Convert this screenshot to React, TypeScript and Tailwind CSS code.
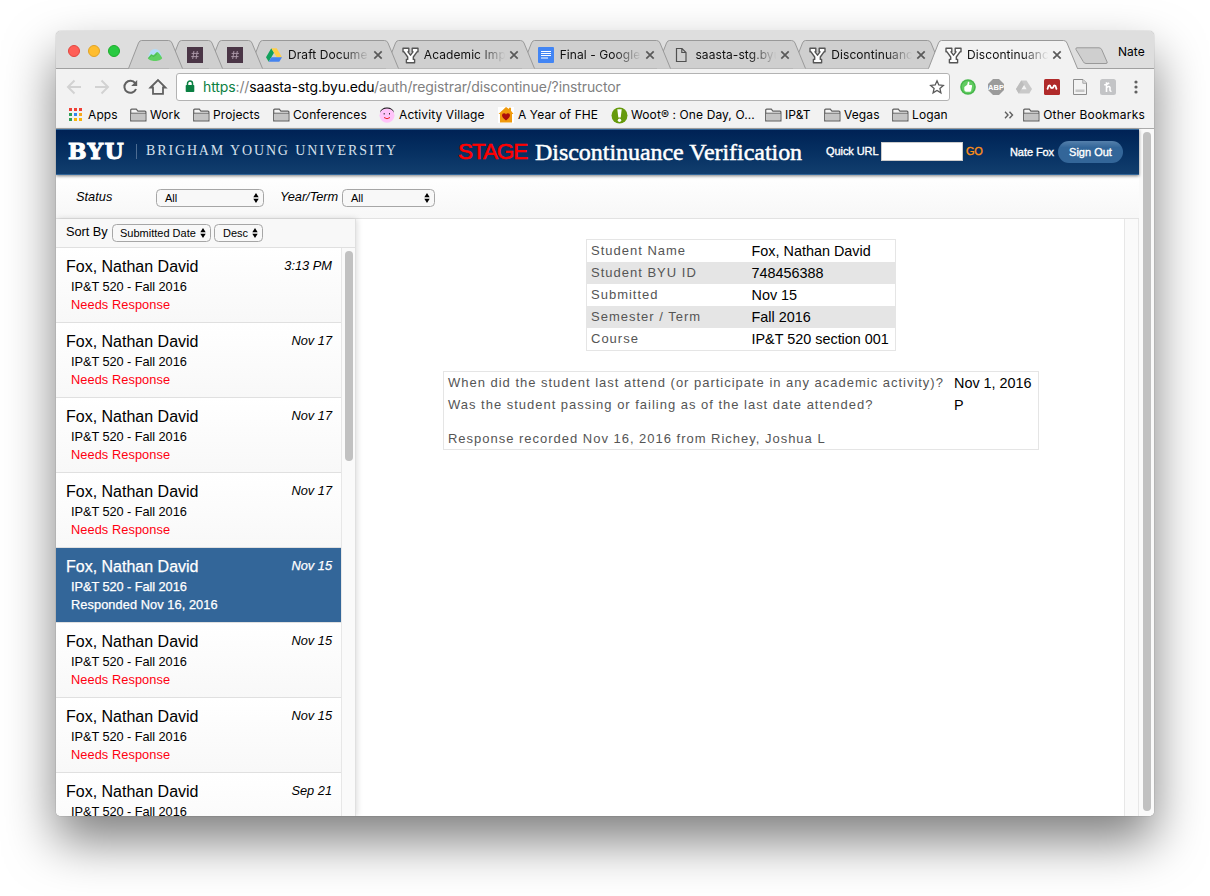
import React from "react";

const ui = "font-['Inter',sans-serif]";

function YLogo() {
  return (
    <svg width="17" height="17" viewBox="0 0 17 17">
      <path
        d="M1 1.200h5.800v3.600H6L8.500 8.200 11 4.800h-.8V1.200H16v3.600h-1L11.300 10v2.400h1.300v3.400H4.400v-3.400h1.300V10L2 4.800H1z"
        fill="#fff"
        stroke="#555"
        strokeWidth="1.400"
        strokeLinejoin="round"
      />
    </svg>
  );
}

function SlackIcon() {
  return (
    <svg width="16" height="16" viewBox="0 0 16 16">
      <rect width="16" height="16" fill="#4a3546" />
      <path d="M6.900 4 5.700 12M10.300 4 9.100 12M4.600 6.400h7.300M4.200 9.600h7.300" stroke="#a995a6" strokeWidth="1" fill="none" />
    </svg>
  );
}

function BasecampIcon() {
  return (
    <svg width="16" height="16" viewBox="0 0 16 16">
      <path d="M1.500 10.500C1.800 5 4.500 2 8 2s6.200 3 6.500 8.500z" fill="#b5dcf8" />
      <path
        d="M.8 11c1.300-.8 2-2.600 3.200-3.700.8-.6 1.600.6 2.400.8C7.500 8.200 8.900 5 10.200 5c1.800.2 3.400 3.500 5 6-.7 2-4 3-7.200 3S1.300 13 .8 11z"
        fill="#5fcf62"
      />
      <path d="M1.600 11c1.400-.6 2-2.200 3-2.700.8 0 1.200 1.200 2 1.200C8 9.300 9 7 10.200 6.200" fill="none" stroke="#3fae4a" strokeWidth=".8" />
    </svg>
  );
}

function DriveIcon() {
  return (
    <svg width="16" height="16" viewBox="0 0 16 16">
      <path d="M5.300 1.200 0 10.300l2.700 4.500L8 5.700z" fill="#12a15c" />
      <path d="M5.300 1.200h5.400l5.300 9.100h-5.300z" fill="#ffcf48" />
      <path d="M5.300 10.300H16l-2.700 4.500H2.700z" fill="#4583ef" />
    </svg>
  );
}

function DocsIcon() {
  return (
    <svg width="16" height="16" viewBox="0 0 16 16">
      <rect width="16" height="16" rx="1" fill="#4285f4" />
      <path d="M3 4.500h10M3 6.500h10M3 8.500h10M3 11h7" stroke="#fff" strokeWidth="1" />
    </svg>
  );
}

function PageIcon() {
  return (
    <svg width="16" height="16" viewBox="0 0 16 16">
      <path d="M3.500 1.500h5.500l4 4v9h-9.500zM8.800 1.500V5.500H13" fill="none" stroke="#505050" strokeWidth="1.200" />
    </svg>
  );
}

function Close() {
  return (
    <svg width="10" height="10" viewBox="0 0 10 10" className="shrink-0">
      <path d="M1.300 1.300l7.400 7.400M8.700 1.300 1.300 8.700" stroke="#5a5a5a" strokeWidth="1.700" />
    </svg>
  );
}

function PinnedTab({ icon, z, first }: { icon: React.ReactNode; z: string; first?: boolean }) {
  return (
    <div className={`relative h-[29px] w-[55px] shrink-0 ${first ? "" : "-ml-[15px]"} ${z}`}>
      <svg width="55" height="29" className="absolute inset-0">
        <path d="M.5 28.500 10.500 3q1-2.500 3-2.500h27q2.500 0 3.500 2.500l10.500 25.500" fill="#cfcfcf" stroke="#999" />
      </svg>
      <div className="relative flex h-full items-center pt-px pl-[19px]">{icon}</div>
    </div>
  );
}

function Tab({ icon, title, z, active, first }: { icon: React.ReactNode; title: string; z: string; active?: boolean; first?: boolean }) {
  return (
    <div className={`relative h-[29px] w-[150px] shrink-0 ${first ? "-ml-[14px]" : "-ml-[14.200px]"} ${z}`}>
      <svg width="150" height="29" className="absolute inset-0">
        <path
          d="M.5 28.500 10.500 3q1-2.500 3-2.500h122q2.500 0 3.500 2.500l10.500 25.500"
          fill={active ? "#f2f2f2" : "#cfcfcf"}
          stroke="#999"
        />
        {active && <path d="M1 28.500h148" stroke="#f2f2f2" />}
      </svg>
      <div className="relative flex h-full items-center pl-[17px]">
        <span className="flex w-[22px] shrink-0 pt-px">{icon}</span>
        <span
          className={`w-[83px] shrink-0 text-[12px] tracking-[0.080px] whitespace-nowrap text-[#111] ${ui} [mask-image:linear-gradient(to_right,black_65%,transparent_98%)]`}
        >
          {title}
        </span>
        <span className="ml-[2px] flex pt-px">
          <Close />
        </span>
      </div>
    </div>
  );
}

function Folder() {
  return (
    <svg width="17" height="14" viewBox="0 0 17 14">
      <path d="M.7 12.800V2.200q0-1 1-1h4.600l1.600 1.900h7q1 0 1 1v8.700z" fill="#f4f4f4" stroke="#606060" strokeWidth="1.200" />
      <path d="M1.300 5.800h14v6.400h-14z" fill="#c4c4c4" />
      <path d="M.7 5.200h15.200" stroke="#606060" strokeWidth="1" />
    </svg>
  );
}

function AppsIcon() {
  const colors = ["#ee4035", "#ee4035", "#ee4035", "#2f9e57", "#2f86f2", "#f5a81c", "#2f9e57", "#f5b40c", "#f5b40c"];
  return (
    <svg width="14" height="14">
      {colors.map((c, i) => (
        <rect key={i} x={1 + (i % 3) * 5} y={Math.floor(i / 3) * 5} width="3" height="3" fill={c} />
      ))}
    </svg>
  );
}

function FaceIcon() {
  return (
    <svg width="16" height="16" viewBox="0 0 16 16">
      <circle cx="8" cy="8.300" r="7.500" fill="#ffc4fa" />
      <path d="M.8 6Q2 .5 8 .5T15.200 6q-1-2.500-3-3.500-4.200-1.800-8.400 0Q1.800 3.500.8 6z" fill="#111" />
      <path d="M5.200 6v1.500M10.500 6v1.500" stroke="#333" />
      <path d="M5 10.500q3 2.500 6 0" fill="none" stroke="#e22" />
    </svg>
  );
}

function HouseIcon() {
  return (
    <svg width="16" height="16" viewBox="0 0 16 16">
      <rect width="16" height="16" fill="#fff" />
      <path d="M8 0l3 2V.8h2v3L15.500 7H14v8.500H2V7H.5z" fill="#f09a0c" />
      <path d="M8 13.500Q4 10.500 4 8.200 4 6.200 6 6.200q1.500 0 2 1.400.5-1.400 2-1.400 2 0 2 2 0 2.300-4 5.300z" fill="#ab0d0d" />
    </svg>
  );
}

function WootIcon() {
  return (
    <svg width="17" height="17" viewBox="0 0 17 17">
      <circle cx="8.500" cy="8.500" r="8" fill="#669a0c" />
      <path d="M6.300 2.200h4.400l-1 8.300H7.300z" fill="#fff" />
      <circle cx="8.500" cy="13.300" r="1.700" fill="#fff" />
    </svg>
  );
}

const bookmarks: { icon: React.ReactNode; label: string; w: string }[] = [
  { icon: <AppsIcon />, label: "Apps", w: "w-[62px]" },
  { icon: <Folder />, label: "Work", w: "w-[63px]" },
  { icon: <Folder />, label: "Projects", w: "w-[80px]" },
  { icon: <Folder />, label: "Conferences", w: "w-[106px]" },
  { icon: <FaceIcon />, label: "Activity Village", w: "w-[119px]" },
  { icon: <HouseIcon />, label: "A Year of FHE", w: "w-[113px]" },
  { icon: <WootIcon />, label: "Woot® : One Day, O...", w: "w-[154px]" },
  { icon: <Folder />, label: "IP&T", w: "w-[59px]" },
  { icon: <Folder />, label: "Vegas", w: "w-[68px]" },
  { icon: <Folder />, label: "Logan", w: "w-[60px]" },
];

function Toolbar() {
  return (
    <div className="flex h-[36px] items-center pb-[1px]">
      <div className="flex w-[120px] shrink-0 items-center pl-[4px]">
        <svg width="112" height="28" viewBox="0 0 112 28" fill="none">
          <path d="M21 14H8M14.500 7.500 8 14l6.500 6.500" stroke="#d2d2d2" strokeWidth="2" />
          <path d="M35 14h13M41.500 7.500 48 14l-6.500 6.500" stroke="#d2d2d2" strokeWidth="2" />
          <path d="M75.200 10.200A6 6 0 1 0 76 16" stroke="#606060" strokeWidth="2" />
          <path d="M77.200 7v6h-6z" fill="#606060" />
          <path d="M90.500 14.500 98 7l7.500 7.500H103v6.300H93v-6.300z" stroke="#606060" strokeWidth="1.800" />
        </svg>
      </div>
      <div className="flex h-[28px] w-[774px] shrink-0 items-center rounded-[3px] border border-[#b3b3b3] bg-white pl-[8px]">
        <svg width="10" height="13" viewBox="0 0 10 13" className="mr-[8px] shrink-0">
          <path d="M2.500 6V3.500a2.500 2.500 0 0 1 5 0V6" fill="none" stroke="#0b8043" strokeWidth="1.500" />
          <rect x=".7" y="5" width="8.600" height="7" rx=".8" fill="#0b8043" />
        </svg>
        <div className="flex-1 text-[14px] tracking-[-0.120px] whitespace-pre text-[#808080] font-['Inter',sans-serif]">
          <span className="text-[#0b8043]">https</span>://<span className="text-black">saasta-stg.byu.edu</span>
          /auth/registrar/discontinue/?instructor
        </div>
        <svg width="16" height="16" viewBox="0 0 16 16" className="mr-[4px]">
          <path
            d="M8 1.800l1.800 4.200 4.500.4-3.400 3 1 4.400L8 11.500l-3.900 2.300 1-4.400-3.400-3 4.500-.4z"
            fill="none"
            stroke="#5a5a5a"
            strokeWidth="1.300"
          />
        </svg>
      </div>
      <div className="ml-[10px] flex gap-[12px]">
        <svg width="16" height="16" viewBox="0 0 16 16">
          <circle cx="8" cy="8" r="7.800" fill="#45b649" />
          <circle cx="8" cy="8" r="6.300" fill="#62cc62" />
          <path d="M4.300 8 7.200 5.800 8 2.800q1.500-.3 1.400 1.200l-.3 2h2.400q.9.400.5 1.500l-.8 4q-.3 1.200-1.400 1.200H6q-1.700-.3-1.700-2z" fill="#fff" />
        </svg>
        <svg width="16" height="16" viewBox="0 0 16 16">
          <path d="M5 0h6l5 5v6l-5 5H5l-5-5V5z" fill="#9b9b9b" />
          <text x="8" y="10.800" textAnchor="middle" fontSize="7.500" fontWeight="700" fontFamily="Liberation Sans" fill="#fff">
            ABP
          </text>
        </svg>
        <svg width="16" height="16" viewBox="0 0 16 16">
          <path d="M5.300 1.500h5.200L16 10l-2.700 4.500H2.700L0 10z" fill="#c9c9c9" />
          <path d="M8 5.700l2.600 4.500H5.400z" fill="#f2f2f2" />
          <path d="M5.300 1.500 0 10l2.700 4.500L8 5.700z" fill="#bdbdbd" />
        </svg>
        <svg width="16" height="16" viewBox="0 0 16 16">
          <rect width="16" height="16" rx="1.500" fill="#b02a2a" />
          <path d="M3.200 10.500Q3.800 9.800 4 8.300q.2-1.800 1.400-1.800 1 0 1.200 1.500.2 1 1.400 1t1.400-1q.2-1.500 1.200-1.500 1.200 0 1.400 1.800.2 1.500.8 2.200" fill="none" stroke="#fff" strokeWidth="1.800" />
        </svg>
        <svg width="16" height="16" viewBox="0 0 16 16">
          <path d="M1.500.5h9.500L14.500 4v11.500h-13z" fill="#f3f3f3" stroke="#8c8c8c" />
          <path d="M10.800.8v3.500h3.500" fill="#ddd" stroke="#aaa" />
          <path d="M3.500 10.500h9v2.500h-9z" fill="#c7c7c7" />
        </svg>
        <svg width="16" height="16" viewBox="0 0 16 16">
          <rect width="16" height="16" rx="2.500" fill="#c3c4c6" />
          <path d="M6.500 13V3.200M4.200 5.800q2.500 0 5-2M6.500 9q1.500-2 3-1.300.8.500.5 2.300-.3 2.600 1.500 2.200" fill="none" stroke="#fff" strokeWidth="1.600" />
        </svg>
        <svg width="16" height="16" viewBox="0 0 16 16" fill="#606060">
          <circle cx="8" cy="3" r="1.600" />
          <circle cx="8" cy="8" r="1.600" />
          <circle cx="8" cy="13" r="1.600" />
        </svg>
      </div>
    </div>
  );
}

function Select({ label, w }: { label: string; w: string }) {
  return (
    <div className={`flex h-[18px] items-center justify-between rounded-[4.500px] border border-[#a6a6a6] bg-[#f8f8f8] pr-[4px] text-[11px] leading-none ${w}`}>
      <span className="whitespace-nowrap">{label}</span>
      <svg width="6" height="10" viewBox="0 0 6 10" className="shrink-0">
        <path d="M3 0l2.700 4.200H.3zM3 10 .3 5.800h5.400z" fill="#000" />
      </svg>
    </div>
  );
}

type Item = { date: string; status: string; selected?: boolean };
const items: Item[] = [
  { date: "3:13 PM", status: "Needs Response" },
  { date: "Nov 17", status: "Needs Response" },
  { date: "Nov 17", status: "Needs Response" },
  { date: "Nov 17", status: "Needs Response" },
  { date: "Nov 15", status: "Responded Nov 16, 2016", selected: true },
  { date: "Nov 15", status: "Needs Response" },
  { date: "Nov 15", status: "Needs Response" },
  { date: "Sep 21", status: "Needs Response" },
];

function ListItem({ item }: { item: Item }) {
  const sel = item.selected;
  return (
    <div
      className={`h-[75px] shrink-0 border-b border-[#e0e0e0] pt-[9px] pr-[9px] pl-[10px] ${
        sel ? "bg-[#336699] text-white [-webkit-text-stroke:0.25px_white]" : "bg-linear-to-b from-white to-[#f8f8f8] text-black"
      }`}
    >
      <div className="flex h-[21px] justify-between">
        <span className="text-[16px] leading-[20px]">Fox, Nathan David</span>
        <span className="text-[12.800px] leading-[18px] italic">{item.date}</span>
      </div>
      <div className="pl-[5px] text-[12.800px] leading-[18px]">
        <div className="tracking-[-0.070px]">IP&amp;T 520 - Fall 2016</div>
        <div className={sel ? "tracking-[0.070px]" : "tracking-[0.070px] text-[#ff0010]"}>{item.status}</div>
      </div>
    </div>
  );
}

const student = [
  ["Student Name", "Fox, Nathan David"],
  ["Student BYU ID", "748456388"],
  ["Submitted", "Nov 15"],
  ["Semester / Term", "Fall 2016"],
  ["Course", "IP&T 520 section 001"],
];

export default function App() {
  return (
    <div className="h-[896px] w-[1210px] overflow-hidden bg-white pt-[31px] pl-[56px] text-black">
      <div className="flex h-[785px] w-[1098px] flex-col rounded-[5px] shadow-[0_25px_50px_rgba(0,0,0,0.5),0_0_1px_rgba(0,0,0,0.6)]">
        <div className="flex min-h-0 flex-1 flex-col overflow-hidden rounded-[5px]">
          <div className="relative flex h-[38px] shrink-0 bg-[#dedede] pt-[9px] shadow-[inset_0_-1px_0_#a0a0a0]">
            <div className="flex w-[72px] shrink-0 gap-[8px] pt-[5px] pl-[12px]">
              <i className="h-[12px] w-[12px] rounded-full border border-[#e2463f] bg-[#ff5f57]" />
              <i className="h-[12px] w-[12px] rounded-full border border-[#e1a325] bg-[#ffbd2e]" />
              <i className="h-[12px] w-[12px] rounded-full border border-[#1dad2b] bg-[#28ca41]" />
            </div>
            <PinnedTab first icon={<BasecampIcon />} z="z-[9]" />
            <PinnedTab icon={<SlackIcon />} z="z-[8]" />
            <PinnedTab icon={<SlackIcon />} z="z-[7]" />
            <Tab first icon={<DriveIcon />} title="Draft Docume" z="z-[6]" />
            <Tab icon={<YLogo />} title="Academic Imp" z="z-[5]" />
            <Tab icon={<DocsIcon />} title="Final - Google" z="z-[4]" />
            <Tab icon={<PageIcon />} title="saasta-stg.byu" z="z-[3]" />
            <Tab icon={<YLogo />} title="Discontinuanc" z="z-[2]" />
            <Tab icon={<YLogo />} title="Discontinuanc" z="z-[20]" active />
            <svg width="36" height="18" className="mt-[7px] -ml-[4px] shrink-0">
              <path d="M3 .8h22q2 0 2.800 2l5.200 12q.8 1.700-1 1.700H12q-2 0-2.800-2L2 2.500Q1.400.8 3 .8z" fill="#cfcfcf" stroke="#999" />
            </svg>
            <span className={`ml-[8px] pt-[4px] text-[12px] leading-[16px] ${ui}`}>Nate</span>
          </div>

          <div className="shrink-0 border-b border-[#aaa] bg-[#f2f2f2]">
            <Toolbar />
            <div className={`flex h-[23px] items-center pr-[9px] pb-[3px] pl-[12px] text-[12px] tracking-[0.100px] whitespace-nowrap ${ui}`}>
              {bookmarks.map((b) => (
                <div key={b.label} className={`flex shrink-0 items-center ${b.w}`}>
                  <span className="flex w-[20px] shrink-0">{b.icon}</span>
                  {b.label}
                </div>
              ))}
              <svg width="10" height="8" viewBox="0 0 10 8" className="ml-auto shrink-0">
                <path d="M1 .8 4 4 1 7.200M5.500.8l3 3.200-3 3.200" fill="none" stroke="#606060" strokeWidth="1.400" />
              </svg>
              <span className="ml-[9px] flex w-[20px] shrink-0">
                <Folder />
              </span>
              <span className="tracking-[0.200px]">Other Bookmarks</span>
            </div>
          </div>

          <div className="flex min-h-0 flex-1 bg-white font-['Liberation_Sans',Arial,sans-serif]">
            <div className="flex w-[1083px] shrink-0 flex-col">
              <header className="z-10 flex h-[46px] shrink-0 items-start border-t border-b border-[#336699] bg-linear-to-b from-[#002255] to-[#113e6e] text-white shadow-[0_1px_3px_rgba(0,0,0,0.5)]">
                <span className="w-[80px] pt-[11px] pl-[12px] font-['DejaVu_Serif',serif] text-[22px] leading-[20px] font-bold tracking-[1.300px] [-webkit-text-stroke:1px_white]">
                  BYU
                </span>
                <i className="mt-[14px] h-[15px] w-px bg-[#4d6c92]" />
                <span className="w-[321px] pt-[12px] pl-[9px] font-['Liberation_Serif',serif] text-[14px] leading-[18px] tracking-[1.860px] whitespace-nowrap text-[#d6e0ec]">
                  BRIGHAM YOUNG UNIVERSITY
                </span>
                <span className="w-[77px] pt-[9px] text-[22.500px] leading-[26px] tracking-[-1.100px] text-[#ff0000] [-webkit-text-stroke:0.6px_red]">
                  STAGE
                </span>
                <span className="w-[291px] pt-[9px] font-['Liberation_Serif',serif] text-[24px] leading-[26px] tracking-[-0.040px] whitespace-nowrap [-webkit-text-stroke:0.5px_white]">
                  Discontinuance Verification
                </span>
                <div className="flex items-center pt-[11px] text-[11px] leading-[22px] whitespace-nowrap [-webkit-text-stroke:0.35px_currentColor]">
                  <span className="-mt-[2px] w-[55px] tracking-[-0.080px]">Quick URL</span>
                  <i className="-mt-[1px] h-[19px] w-[82px] border border-[#ccc] bg-white" />
                  <span className="-mt-[2px] w-[47px] pl-[3px] tracking-[-0.200px] text-[#ff9018]">GO</span>
                  <span className="w-[48px] tracking-[-0.080px]">Nate Fox</span>
                  <span className="h-[22px] w-[65px] rounded-full bg-linear-to-b from-[#5580ab] via-[#336699] via-30% to-[#336699] text-center">
                    Sign Out
                  </span>
                </div>
              </header>

              <div className="flex h-[44px] shrink-0 items-center border-b border-[#e2e2e2] bg-linear-to-b from-white to-[#f7f7f7] pt-[3px] text-[12.800px]">
                <span className="w-[100px] pb-[2px] pl-[20px] italic">Status</span>
                <Select label="All" w="w-[108px] pl-[8px]" />
                <span className="w-[78px] pb-[2px] pl-[16px] tracking-[-0.050px] whitespace-nowrap italic">Year/Term</span>
                <Select label="All" w="w-[93px] pl-[8px]" />
              </div>

              <div className="flex min-h-0 flex-1">
                <aside className="z-[5] flex w-[300px] shrink-0 flex-col border-r border-[#e0e0e0] bg-[#f8f8f8] shadow-[1px_0_6px_rgba(0,0,0,0.15)]">
                  <div className="flex h-[29px] shrink-0 items-center gap-[3px] border-b border-[#e0e0e0] text-[12.800px]">
                    <span className="w-[53px] pb-[3px] pl-[10px] tracking-[-0.060px] whitespace-nowrap">Sort By</span>
                    <Select label="Submitted Date" w="w-[99px] pl-[7px]" />
                    <Select label="Desc" w="w-[49px] pl-[8px]" />
                  </div>
                  <div className="flex min-h-0 flex-1">
                    <div className="flex w-[285px] flex-col overflow-hidden">
                      {items.map((it, i) => (
                        <ListItem key={i} item={it} />
                      ))}
                    </div>
                    <div className="flex-1 border-l border-[#e7e7e7] bg-[#fafafa] pt-[3px] pl-[3px]">
                      <div className="h-[210px] w-[8px] rounded-full bg-[#c1c1c1]" />
                    </div>
                  </div>
                </aside>

                <main className="flex flex-1 flex-col items-center bg-white pt-[20px] pl-[2px]">
                  <div className="w-[310px] border border-[#e5e5e5]">
                    {student.map(([k, v]) => (
                      <div key={k} className="flex h-[22px] items-center pl-[4px] whitespace-nowrap even:bg-[#e5e5e5]">
                        <span className="w-[160.500px] text-[13px] tracking-[1px] text-[#555]">{k}</span>
                        <span className="pt-[1px] text-[14.400px]">{v}</span>
                      </div>
                    ))}
                  </div>
                  <div className="mt-[20px] h-[79px] w-[596px] border border-[#e5e5e5] pl-[4px] text-[13px] tracking-[0.985px] whitespace-nowrap text-[#555]">
                    <div className="flex h-[22px] items-center">
                      <span className="w-[506px]">When did the student last attend (or participate in any academic activity)?</span>
                      <span className="pt-[1px] text-[14.400px] tracking-normal text-black">Nov 1, 2016</span>
                    </div>
                    <div className="flex h-[22px] items-center">
                      <span className="w-[506px]">Was the student passing or failing as of the last date attended?</span>
                      <span className="pt-[1px] text-[14.400px] tracking-normal text-black">P</span>
                    </div>
                    <div className="flex h-[46px] items-center">Response recorded Nov 16, 2016 from Richey, Joshua L</div>
                  </div>
                </main>
                <div className="w-[15px] shrink-0 border-x border-[#e7e7e7] bg-[#fafafa]" />
              </div>
            </div>
            <div className="flex-1 bg-[#fafafa] pt-[3px] pl-[4px]">
              <div className="h-[679px] w-[8px] rounded-full bg-[#c1c1c1]" />
            </div>
          </div>
        </div>
      </div>
    </div>
  );
}
